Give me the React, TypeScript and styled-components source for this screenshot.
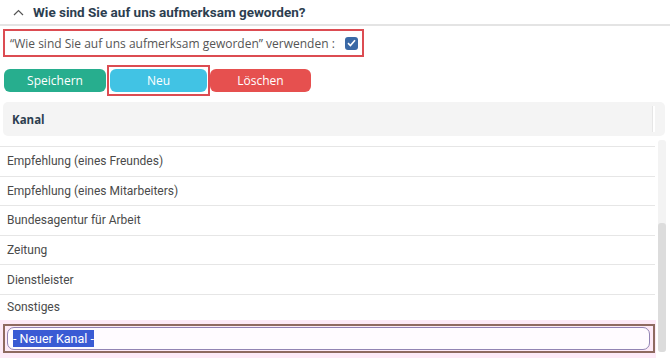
import React from "react";
import styled, { createGlobalStyle } from "styled-components";

const Global = createGlobalStyle`
  html, body { margin: 0; padding: 0; background: #fff; }
  body { font-family: Roboto, "Open Sans", sans-serif; }
`;

const Page = styled.div`
  width: 670px;
  height: 362px;
  overflow: hidden;
  display: flex;
  flex-direction: column;
`;

const Header = styled.div`
  height: 24px;
  display: flex;
  align-items: center;
  gap: 9px;
  padding-left: 13px;
  border-bottom: 2px solid #e4e4e4;
`;

const Title = styled.h2`
  margin: 0;
  font-family: Roboto, sans-serif;
  font-weight: 700;
  font-size: 13.5px;
  color: #2c3e50;
`;

const CheckRow = styled.label`
  margin: 3px 0 0 3px;
  width: 361px;
  height: 28px;
  box-sizing: border-box;
  border: 2px solid #dc4c52;
  display: flex;
  align-items: center;
  justify-content: space-between;
  padding: 0 4px 0 5px;
  font-family: "Open Sans", sans-serif;
  font-size: 12px;
  white-space: nowrap;
  color: #555;
`;

const CheckBox = styled.span`
  width: 13px;
  height: 13px;
  border-radius: 3px;
  background: #3a69a6;
  display: flex;
  align-items: center;
  justify-content: center;
`;

const ButtonRow = styled.div`
  margin-top: 8px;
  padding-left: 4px;
  display: flex;
  align-items: center;
  height: 30px;
`;

const Button = styled.button<{ $bg: string; $w?: number }>`
  width: ${(p) => p.$w ?? 102}px;
  height: 23px;
  border: none;
  border-radius: 6px;
  background: ${(p) => p.$bg};
  color: #fff;
  font-family: "Open Sans", sans-serif;
  font-size: 12px;
  padding: 0;
`;

const Highlight = styled.span`
  border: 2px solid #dc4c52;
  padding: 2px 1px;
  display: flex;
  margin: 0 0 0 1px;
`;

const Table = styled.div`
  margin-top: 7px;
  display: flex;
  flex-direction: column;
`;

const TableHead = styled.div`
  margin-left: 3px;
  width: 662px;
  height: 34px;
  background: #f4f4f4;
  border-radius: 5px;
  display: flex;
  align-items: center;
  justify-content: space-between;
  padding: 0 10px 0 9px;
  box-sizing: border-box;
  font-family: "Open Sans", sans-serif;
  font-weight: 700;
  font-size: 11.5px;
  color: #2c3e50;
`;

const Resizer = styled.span`
  width: 2px;
  height: 26px;
  background: #fff;
  border-left: 1px solid #e6e6e6;
`;

const Body = styled.div`
  display: flex;
  height: 222px;
`;

const List = styled.div`
  width: 656px;
  display: flex;
  flex-direction: column;
`;

const Row = styled.div<{ $h: number; $last?: boolean }>`
  height: ${(p) => p.$h}px;
  box-sizing: border-box;
  border-bottom: ${(p) => (p.$last ? "none" : "1px solid #e6e6e6")};
  display: flex;
  align-items: center;
  padding-left: 7px;
  font-family: Roboto, sans-serif;
  font-size: 12px;
  color: #4a4a4a;
  margin-right: 1px;
`;

const EditRow = styled.div`
  height: 38px;
  background: #fdeaf7;
  display: flex;
  align-items: center;
  padding-left: 3px;
`;

const EditFrame = styled.div`
  width: 652px;
  height: 29px;
  box-sizing: border-box;
  border: 2px solid #8e6a60;
  padding: 1px 3px 1px 2px;
  display: flex;
`;

const Input = styled.div`
  flex: 1;
  border: 1px solid #9284b4;
  border-radius: 7px;
  background: #fffbff;
  display: flex;
  align-items: center;
  padding-left: 5px;
  font-family: Roboto, sans-serif;
  font-size: 12.5px;
`;

const Selected = styled.span`
  background: #3a5bd4;
  color: #fff;
  padding: 1px 0;
`;

const Track = styled.div`
  margin: 4px 0 6px 2px;
  width: 8px;
  background: #f3f3f3;
  border-radius: 3px;
  display: flex;
  flex-direction: column;
  justify-content: flex-end;
`;

const Thumb = styled.div`
  height: 129px;
  background: #dcdcdc;
  border-radius: 3px;
`;

const items = [
  "Empfehlung (eines Freundes)",
  "Empfehlung (eines Mitarbeiters)",
  "Bundesagentur für Arbeit",
  "Zeitung",
  "Dienstleister",
];

export default function App() {
  return (
    <Page>
      <Global />
      <Header>
        <svg width="11" height="7" viewBox="0 0 11 7">
          <path d="M1 6 L5.5 1.5 L10 6" fill="none" stroke="#555" strokeWidth="1.2" />
        </svg>
        <Title>Wie sind Sie auf uns aufmerksam geworden?</Title>
      </Header>
      <CheckRow>
        <span>“Wie sind Sie auf uns aufmerksam geworden” verwenden :</span>
        <CheckBox>
          <svg width="9" height="8" viewBox="0 0 9 8">
            <path d="M1 4.2 L3.4 6.5 L8 1.2" fill="none" stroke="#fff" strokeWidth="1.6" />
          </svg>
        </CheckBox>
      </CheckRow>
      <ButtonRow>
        <Button $bg="#27ae8e">Speichern</Button>
        <Highlight>
          <Button $bg="#41c3e4" $w={97}>Neu</Button>
        </Highlight>
        <Button $bg="#e6504f" $w={101}>Löschen</Button>
      </ButtonRow>
      <Table>
        <TableHead>
          <span>Kanal</span>
          <Resizer />
        </TableHead>
        <Body>
          <List>
            <Row $h={11} />
            {items.map((t) => (
              <Row key={t} $h={29.6}>
                {t}
              </Row>
            ))}
            <Row $h={25} $last>Sonstiges</Row>
            <EditRow>
              <EditFrame>
                <Input>
                  <Selected>- Neuer Kanal -</Selected>
                </Input>
              </EditFrame>
            </EditRow>
          </List>
          <Track>
            <Thumb />
          </Track>
        </Body>
      </Table>
    </Page>
  );
}
